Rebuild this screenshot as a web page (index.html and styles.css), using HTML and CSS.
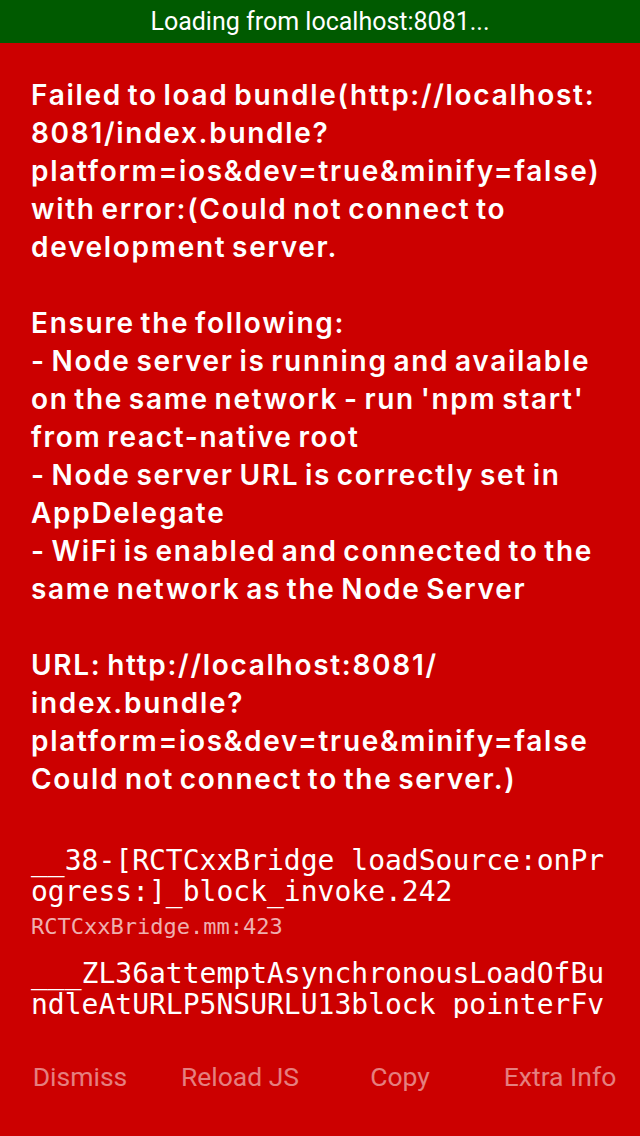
FILE: index.html
```html
<!DOCTYPE html>
<html lang="en">
<head>
<meta charset="utf-8">
<title>RedBox</title>
<link rel="stylesheet" href="styles.css">
</head>
<body>
<div class="screen">
  <div class="loading-bar">Loading from localhost:8081...</div>
  <div class="redbox">
    <div class="scroll">
      <p class="message">Failed to load bundle(http://localhost:<wbr>8081/index.bundle?<wbr>platform=ios&amp;dev=true&amp;minify=false) with error:(Could not connect to development server.

Ensure the following:
- Node server is running and available on the same network - run 'npm start' from react-native root
- Node server URL is correctly set in AppDelegate
- WiFi is enabled and connected to the same network as the Node Server

URL: http://localhost:8081/<wbr>index.bundle?<wbr>platform=ios&amp;dev=true&amp;minify=false
Could not connect to the server.)</p>
      <div class="stack">
        <div class="frame">
          <div class="frame-method">__38-[RCTCxxBridge loadSource:onProgress:]_block_invoke.242</div>
          <div class="frame-file">RCTCxxBridge.mm:423</div>
        </div>
        <div class="frame">
          <div class="frame-method">___ZL36attemptAsynchronousLoadOfBundleAtURLP5NSURLU13block_pointerFv</div>
        </div>
      </div>
    </div>
    <div class="buttons">
      <div class="button">Dismiss</div>
      <div class="button">Reload JS</div>
      <div class="button">Copy</div>
      <div class="button">Extra Info</div>
    </div>
  </div>
</div>
</body>
</html>
```

FILE: styles.css
```css
html, body {
  margin: 0;
  padding: 0;
}
body {
  width: 640px;
  height: 1136px;
  overflow: hidden;
  background: #cc0000;
  font-family: Roboto, "Liberation Sans", sans-serif;
}
.screen {
  display: flex;
  flex-direction: column;
  height: 1136px;
}
.loading-bar {
  height: 43px;
  background: #005a00;
  color: #ffffff;
  font-size: 25px;
  line-height: 43px;
  text-align: center;
}
.redbox {
  flex: 1;
  display: flex;
  flex-direction: column;
  background: #cc0000;
  min-height: 0;
}
.scroll {
  flex: 0 0 975px;
  overflow: hidden;
  padding: 33px 26px 0 31px;
  box-sizing: border-box;
}
.message {
  margin: 0;
  color: #ffffff;
  font-family: Inter, "Open Sans", sans-serif;
  font-size: 28px;
  font-weight: 600;
  letter-spacing: 1.7px;
  word-spacing: -3px;
  line-height: 38px;
  white-space: pre-line;
}
.stack {
  margin-top: 47px;
}
.frame {
  margin-bottom: 12px;
}
.frame-method {
  color: #ffffff;
  font-family: "DejaVu Sans Mono", "Liberation Mono", monospace;
  font-size: 28px;
  line-height: 31px;
  word-break: break-all;
}
.frame-file {
  color: rgba(255, 255, 255, 0.7);
  font-family: "DejaVu Sans Mono", "Liberation Mono", monospace;
  font-size: 22px;
  line-height: 39px;
}
.buttons {
  flex: 1;
  display: flex;
  align-items: center;
}
.button {
  flex: 1;
  text-align: center;
  color: rgba(255, 255, 255, 0.5);
  font-size: 26.5px;
  line-height: 32px;
}
```
